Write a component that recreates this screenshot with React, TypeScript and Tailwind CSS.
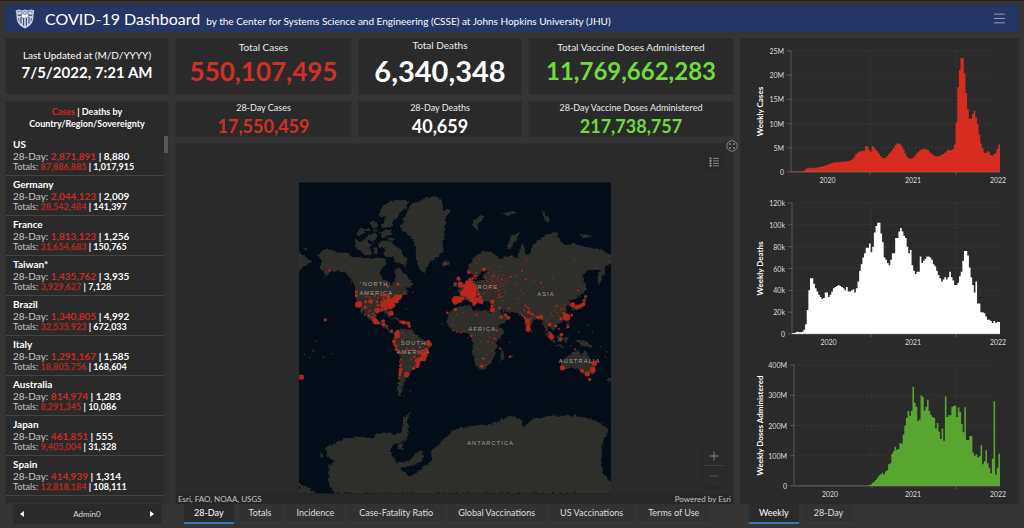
import { Menu, Minus, Plus } from "lucide-react";
import clsx from "clsx";

interface CountryStats {
    name: string;
    cases28: string;
    deaths28: string;
    casesTotal: string;
    deathsTotal: string;
}

const COUNTRIES: CountryStats[] = [
    { name: "US", cases28: "2,871,891", deaths28: "8,880", casesTotal: "87,886,885", deathsTotal: "1,017,915" },
    { name: "Germany", cases28: "2,044,123", deaths28: "2,009", casesTotal: "28,542,484", deathsTotal: "141,397" },
    { name: "France", cases28: "1,813,123", deaths28: "1,256", casesTotal: "31,654,683", deathsTotal: "150,765" },
    { name: "Taiwan*", cases28: "1,435,762", deaths28: "3,935", casesTotal: "3,929,627", deathsTotal: "7,128" },
    { name: "Brazil", cases28: "1,340,805", deaths28: "4,992", casesTotal: "32,535,923", deathsTotal: "672,033" },
    { name: "Italy", cases28: "1,291,167", deaths28: "1,585", casesTotal: "18,805,756", deathsTotal: "168,604" },
    { name: "Australia", cases28: "814,974", deaths28: "1,283", casesTotal: "8,291,345", deathsTotal: "10,086" },
    { name: "Japan", cases28: "461,851", deaths28: "555", casesTotal: "9,405,004", deathsTotal: "31,328" },
    { name: "Spain", cases28: "414,939", deaths28: "1,314", casesTotal: "12,818,184", deathsTotal: "108,111" },
];

const MAP_TABS = [
    "28-Day",
    "Totals",
    "Incidence",
    "Case-Fatality Ratio",
    "Global Vaccinations",
    "US Vaccinations",
    "Terms of Use",
];

// Weekly series, January 2020 to July 2022
const WEEKLY_CASES = [
    0.1, 0.1, 0.1, 0.1, 0.1, 0.1, 0.1, 0.2, 0.4, 0.7, 0.8, 0.9, 0.8, 0.8, 0.9, 0.9, 1.0, 1.1, 1.1, 1.2, 1.3, 1.4,
    1.5, 1.7, 1.8, 1.9, 2.0, 2.0, 2.0, 2.0, 2.1, 2.1, 2.1, 2.2, 2.2, 2.3, 2.5, 2.7, 3.1, 3.7, 4.0, 4.2, 4.3, 4.4,
    4.4, 5.3, 5.3, 4.6, 4.2, 5.3, 5.1, 4.6, 4.3, 3.8, 3.3, 2.9, 2.9, 3.0, 3.3, 3.7, 4.1, 4.5, 5.0, 5.6, 5.9, 5.9,
    5.7, 5.2, 4.6, 3.8, 3.2, 2.9, 2.7, 2.8, 3.0, 3.4, 3.9, 4.2, 4.5, 4.7, 4.8, 4.8, 4.7, 4.5, 4.1, 3.8, 3.5, 3.3,
    3.2, 3.3, 3.3, 3.5, 3.7, 4.0, 4.3, 4.6, 4.5, 4.6, 4.7, 5.7, 10.3, 17.5, 21, 23.5, 23.5, 20.4, 16.3, 13, 11, 11,
    12, 12.6, 11.3, 9.9, 7.7, 5.9, 4.9, 4, 3.9, 4.3, 4.1, 3.5, 3.4, 3.7, 4, 4.8, 5.7,
];

const WEEKLY_DEATHS = [
    1, 1, 1.5, 2, 1.5, 1.5, 2, 4, 9, 22, 40, 51, 51, 46, 42, 39, 36, 34, 32, 33, 38, 38, 34, 36, 39, 42, 43, 44, 45,
    44, 43, 42, 40, 43, 39, 39, 40, 41, 38, 42, 48, 58, 64, 70, 74, 79, 79, 83, 75, 80, 93, 99, 102, 102, 92, 84, 70,
    68, 65, 63, 68, 74, 74, 88, 88, 94, 97, 94, 90, 88, 80, 74, 77, 63, 58, 55, 57, 57, 71, 65, 67, 69, 71, 71, 70,
    68, 64, 62, 58, 54, 51, 48, 50, 52, 50, 52, 57, 52, 49, 45, 45, 47, 53, 57, 67, 76, 76, 72, 61, 52, 45, 38, 48,
    28, 28, 20, 20, 19, 16, 13, 13, 12, 10, 12, 10, 11, 11,
];

const WEEKLY_DOSES = [
    ...Array<number>(46).fill(1),
    3, 5, 10, 15, 20, 27, 35, 38, 44, 38, 48, 52, 72, 75, 107, 115, 130, 120, 122, 142, 140, 170, 200, 225, 248, 232,
    248, 328, 275, 262, 215, 220, 300, 295, 250, 262, 285, 248, 235, 228, 225, 190, 208, 180, 155, 190, 150, 297, 228,
    234, 234, 262, 265, 265, 228, 260, 245, 205, 178, 260, 152, 152, 165, 165, 110, 100, 105, 95, 98, 135, 72, 82,
    118, 75, 60, 42, 90, 280, 38, 60, 107,
];

const LAND = [
    // North and Central America
    "M66 235L80 215L100 213L125 222L150 222L168 235L200 238L225 240L250 237L268 240L275 255L258 268L252 285L262 303L280 308L288 322L297 308L300 290L297 272L310 268L325 285L335 290L345 305L352 318L345 327L325 328L340 340L325 350L305 365L298 380L285 392L278 400L286 418L280 420L272 405L258 402L245 408L238 420L242 430L252 432L258 425L268 424L264 438L277 442L282 456L300 460L288 466L270 450L255 440L235 434L220 422L212 408L200 392L206 412L195 398L183 370L178 345L178 325L165 300L150 285L130 278L108 278L88 298L65 314L92 292L75 272L68 260L80 250Z",
    "M10 220L30 235L48 248L40 255L25 262L10 280Z",
    // Canadian archipelago
    "M250 104L262 82L282 68L312 62L338 68L334 88L310 104L305 118L290 128L292 142L272 150L254 140L266 128L270 112L256 118Z",
    "M178 182L192 190L208 184L225 195L222 210L230 230L212 232L198 222L186 210L178 205Z",
    "M246 192L266 186L290 190L298 204L315 212L322 228L335 245L330 268L316 256L302 252L290 234L278 238L262 226L268 210L250 208Z",
    "M180 164L198 148L210 150L206 162L192 172L182 170Z",
    "M208 176L222 168L232 160L246 172L236 190L222 186L212 190Z",
    "M222 132L234 126L244 132L246 146L230 150Z",
    "M206 150L220 146L224 156L212 160Z",
    "M232 152L246 152L244 160L234 160Z",
    "M252 162L270 154L288 155L290 168L276 172L262 180Z",
    "M270 178L292 176L300 182L284 186Z",
    "M250 246L268 240L272 256L262 264Z",
    "M232 208L244 206L246 224L236 228Z",
    // Greenland and Iceland
    "M318 125L328 110L335 100L340 84L350 75L368 72L385 60L400 58L415 52L428 58L440 65L438 82L445 95L466 90L460 104L450 115L452 132L445 150L448 172L440 190L445 215L432 230L420 240L400 255L394 270L388 284L375 278L368 264L362 250L360 232L364 220L358 205L352 180L335 165L315 155L312 140L325 132Z",
    "M438 250L452 247L464 253L456 263L442 261Z",
    "M25 210L36 208L36 214L27 215Z",
    // Caribbean
    "M290 416L306 420L318 430L304 426Z",
    "M318 430L334 432L332 438L320 437Z",
    // South America
    "M300 460L320 450L345 452L365 470L372 480L400 488L408 497L400 512L396 535L380 545L370 560L352 575L336 594L326 610L320 635L314 645L326 650L310 650L304 636L309 610L312 570L312 532L298 510L290 484Z",
    // Eurasia
    "M515 282L520 260L535 235L560 220L585 218L605 235L615 242L640 232L668 238L674 202L684 195L690 230L702 226L704 210L725 185L755 168L785 160L790 185L810 200L835 195L865 205L905 210L947 228L947 258L930 262L925 285L911 320L903 300L915 275L895 272L875 275L860 290L866 320L870 332L856 350L836 362L822 366L826 380L812 382L812 400L816 415L800 430L782 440L776 456L766 450L760 442L756 460L770 480L760 478L746 450L740 425L726 420L716 426L705 440L698 464L688 445L684 420L670 405L650 400L638 405L624 395L614 386L620 405L640 412L630 430L604 446L594 430L585 405L592 388L590 370L566 368L560 378L546 364L540 376L524 370L496 360L486 376L470 376L470 358L490 355L494 345L484 335L504 325L514 310L522 300L540 310L565 300L563 286L576 278L566 270L556 280L542 300L530 286Z",
    "M484 300L492 296L496 312L506 324L488 328L490 314Z",
    "M474 314L484 312L484 324L474 326Z",
    "M632 206L648 175L676 158L662 178L645 212Z",
    "M528 128L552 110L566 112L562 124L548 134L546 156L536 148Z",
    "M738 100L748 98L752 112L762 122L756 132L744 118Z",
    "M855 166L885 170L890 176L860 178Z",
    "M618 108L640 100L664 98L660 106L636 112Z",
    // Africa and Madagascar
    "M465 400L482 386L520 380L530 392L545 396L575 394L586 405L598 430L612 450L630 452L622 465L604 490L600 528L586 554L570 570L553 575L543 565L533 530L530 495L526 470L510 462L485 464L465 452L455 437L456 418Z",
    "M614 520L624 514L624 540L616 548Z",
    // Japan, Indonesia and Oceania
    "M828 388L845 384L862 378L866 352L874 350L868 384L850 392L832 396Z",
    "M864 312L870 312L872 336L866 334Z",
    "M748 462L764 470L780 490L776 496L760 480Z",
    "M784 475L798 465L802 480L794 492L784 488Z",
    "M806 476L818 474L814 494L806 492Z",
    "M812 428L820 430L824 452L816 448Z",
    "M780 499L812 502L812 506L780 503Z",
    "M838 484L856 486L876 490L892 506L872 504L856 502Z",
    "M793 550L810 535L830 520L850 518L860 532L868 510L880 535L900 560L895 580L880 592L860 585L850 570L825 568L800 575L793 565Z",
    "M877 600L886 600L882 607Z",
    "M947 596L947 606L933 614L936 606Z",
    // Antarctica
    "M10 913L40 930L65 945L10 945Z",
    "M118 945L100 920L98 860L118 850L95 835L90 805L110 800L125 788L150 780L200 775L235 780L240 765L270 762L300 768L320 755L322 720L348 695L335 722L340 760L330 785L300 795L285 805L290 835L305 852L340 848L360 825L375 815L385 830L380 848L350 860L315 868L320 880L345 893L370 875L410 845L405 820L440 790L465 760L490 748L530 742L590 735L640 712L678 722L683 748L715 720L765 712L845 712L895 725L940 750L925 780L917 820L920 880L947 912L947 945Z",
    "M305 795L322 798L322 812L308 812Z",
    "M72 826L80 826L84 838L76 836Z",
].join("");

// x, y, radius
const CASE_DOTS = [
    [102, 276, 4], [148, 259, 2], [174, 257, 2], [166, 313, 2], [195, 313, 3], [242, 315, 2], [277, 324, 4],
    [307, 317, 5], [350, 317, 2], [89, 424, 5], [182, 340, 5], [182, 351, 5], [188, 378, 10], [192, 376, 7],
    [206, 345, 3], [212, 355, 3], [222, 356, 3], [210, 370, 5], [225, 369, 7], [209, 386, 5], [223, 396, 3],
    [238, 352, 3], [246, 358, 3], [244, 370, 4], [247, 380, 4], [245, 395, 8], [257, 350, 4], [265, 350, 5],
    [264, 361, 4], [278, 354, 6], [258, 370, 4], [260, 380, 7], [268, 370, 6], [268, 382, 8], [270, 390, 6],
    [278, 364, 7], [280, 376, 8], [284, 386, 7], [290, 368, 8], [290, 380, 8], [296, 362, 8], [302, 356, 8],
    [309, 357, 8], [302, 368, 7], [315, 352, 5], [326, 344, 3], [333, 347, 2], [351, 342, 2], [286, 404, 8],
    [258, 393, 5], [331, 391, 2], [199, 393, 3], [208, 409, 3], [219, 411, 4], [218, 400, 2], [229, 416, 4],
    [233, 405, 3], [237, 412, 3], [237, 425, 7], [241, 430, 8], [248, 434, 4], [263, 427, 5], [264, 438, 6],
    [274, 442, 3], [288, 457, 5], [314, 430, 4], [321, 431, 6], [328, 432, 5], [338, 434, 6], [341, 443, 5],
    [304, 466, 8], [306, 458, 5], [300, 478, 5], [308, 474, 5], [320, 462, 3], [326, 470, 2], [345, 467, 2],
    [353, 478, 2], [365, 472, 2], [318, 484, 3], [295, 490, 6], [296, 499, 4], [302, 503, 4], [302, 513, 5],
    [308, 515, 3], [315, 523, 4], [327, 478, 2], [339, 492, 2], [355, 470, 2], [334, 511, 3], [350, 514, 4],
    [373, 506, 4], [398, 490, 6], [402, 498, 7], [393, 496, 5], [391, 512, 5], [388, 521, 6], [383, 529, 8],
    [390, 530, 6], [385, 540, 8], [374, 542, 7], [364, 546, 7], [368, 553, 6], [365, 562, 7], [354, 569, 5],
    [347, 543, 3], [356, 535, 4], [370, 522, 6], [333, 588, 8], [317, 543, 3], [317, 555, 2], [314, 562, 4],
    [315, 573, 6], [313, 582, 5], [312, 590, 4], [311, 600, 3], [307, 615, 2], [314, 640, 2], [344, 637, 2],
    [17, 596, 8], [60, 488, 2], [26, 527, 2], [43, 536, 2], [51, 516, 2], [56, 518, 2], [83, 536, 2], [110, 526, 2],
    [449, 256, 3], [439, 436, 2], [455, 403, 4], [479, 393, 5],
    [488, 300, 6], [478, 316, 5], [495, 319, 9], [523, 303, 5], [515, 312, 7], [525, 313, 8], [510, 323, 8],
    [520, 324, 9], [531, 322, 9], [500, 344, 7], [505, 345, 10], [517, 340, 12], [529, 338, 13], [522, 350, 12],
    [534, 350, 9], [510, 334, 8], [540, 331, 6], [529, 362, 9], [537, 368, 9], [535, 378, 5], [545, 363, 6],
    [555, 368, 8], [482, 364, 12], [492, 364, 9], [473, 366, 5], [478, 374, 5], [501, 360, 5], [549, 347, 5],
    [554, 356, 5], [564, 345, 3], [546, 340, 3], [520, 282, 5], [538, 292, 4], [542, 283, 3], [540, 300, 3],
    [531, 299, 4], [542, 254, 2], [551, 243, 2], [536, 268, 2], [565, 273, 6], [578, 283, 2], [586, 235, 2],
    [583, 269, 2], [573, 305, 2], [560, 308, 2], [590, 370, 7], [589, 382, 5], [590, 394, 8], [612, 388, 4],
    [616, 416, 5], [624, 400, 3], [630, 409, 5], [638, 418, 6], [639, 390, 3], [592, 292, 3], [606, 300, 3],
    [611, 264, 2], [641, 262, 2], [647, 233, 2], [694, 242, 2], [679, 277, 3], [690, 302, 3], [645, 295, 3],
    [660, 291, 2], [664, 318, 2], [674, 337, 2], [682, 345, 2], [668, 360, 2], [713, 290, 2], [709, 310, 2],
    [736, 313, 3], [752, 265, 2], [771, 299, 2], [836, 242, 2], [899, 270, 2], [940, 248, 2], [800, 320, 2],
    [832, 317, 2], [853, 322, 2], [766, 344, 3], [847, 336, 3], [871, 331, 2], [720, 307, 2], [744, 325, 2],
    [688, 380, 3], [694, 386, 3], [700, 390, 3], [699, 401, 5], [708, 407, 4], [686, 396, 3], [680, 410, 3],
    [676, 404, 2], [696, 428, 8], [698, 440, 6], [698, 452, 8], [688, 418, 4], [706, 420, 3], [708, 460, 2],
    [715, 410, 3], [722, 416, 3], [728, 416, 5], [735, 415, 6], [739, 414, 4], [740, 420, 3], [754, 428, 2],
    [762, 438, 6], [780, 442, 5], [768, 404, 2], [776, 386, 2], [786, 402, 2], [795, 376, 2], [784, 382, 3],
    [797, 392, 3], [776, 396, 2], [804, 390, 2], [808, 378, 2], [790, 412, 2], [770, 412, 2], [796, 421, 5],
    [813, 416, 11], [828, 410, 4], [805, 405, 4], [800, 403, 2], [831, 379, 8], [843, 386, 6], [850, 384, 6],
    [858, 380, 6], [863, 377, 6], [865, 366, 4], [870, 354, 4], [816, 446, 4], [849, 460, 2], [877, 440, 2],
    [890, 460, 2], [765, 468, 5], [768, 475, 8], [762, 462, 4], [790, 451, 3], [798, 468, 5], [795, 482, 5],
    [826, 502, 2], [839, 512, 3], [875, 496, 2], [915, 505, 2], [933, 520, 2], [929, 535, 2],
    [800, 568, 8], [859, 577, 6], [875, 586, 8], [891, 574, 9], [896, 554, 8], [882, 603, 5],
    [472, 424, 2], [486, 408, 2], [503, 404, 2], [543, 409, 3], [471, 440, 2], [489, 436, 2], [473, 456, 3],
    [482, 460, 2], [496, 462, 3], [505, 456, 2], [527, 472, 4], [517, 478, 2], [560, 463, 2], [580, 462, 2],
    [604, 456, 4], [622, 464, 2], [597, 480, 3], [582, 476, 2], [577, 488, 3], [590, 496, 2], [556, 490, 2],
    [545, 509, 2], [572, 514, 2], [588, 514, 2], [563, 540, 4], [558, 563, 5], [575, 529, 2], [580, 550, 2],
    [571, 558, 2], [546, 541, 2], [592, 530, 2], [613, 510, 3], [617, 513, 2], [643, 491, 2], [643, 535, 4],
    [649, 533, 2], [621, 529, 2],
    // Eastern Europe and western Russia
    [566, 318, 2], [571, 296, 2], [577, 311, 2], [579, 324, 3], [584, 302, 2], [586, 316, 2], [588, 330, 2],
    [590, 309, 2], [594, 322, 3], [595, 301, 2], [598, 312, 2], [600, 294, 2], [601, 328, 2], [603, 319, 2],
    [607, 308, 2], [609, 336, 3], [610, 292, 2], [612, 325, 2], [614, 314, 2], [616, 343, 2], [618, 303, 3],
    [619, 332, 2], [622, 321, 2], [623, 290, 2], [625, 311, 2], [627, 340, 2], [630, 300, 2], [632, 316, 2],
    [610, 348, 3], [614, 356, 3], [620, 353, 2], [606, 357, 2], [622, 365, 2], [619, 298, 2], [636, 306, 2],
    [575, 332, 2], [582, 343, 2], [571, 340, 2], [598, 340, 2], [587, 296, 2], [593, 286, 2],
];

const CONTINENTS = [
    { label: "NORTH", x: 240, y: 321 },
    { label: "AMERICA", x: 242, y: 348 },
    { label: "EUROPE", x: 562, y: 331 },
    { label: "ASIA", x: 751, y: 352 },
    { label: "AFRICA", x: 560, y: 456 },
    { label: "SOUTH", x: 354, y: 500 },
    { label: "AMERICA", x: 354, y: 527 },
    { label: "AUSTRALIA", x: 852, y: 554 },
    { label: "ANTARCTICA", x: 585, y: 798 },
];

function WorldMap() {
    return (
        <svg viewBox="10 12 936 933" className="h-[312px] w-[312px]" role="img" aria-label="World map of cases">
            <defs>
                <filter id="coast" x="0" y="0" width="100%" height="100%">
                    <feTurbulence type="fractalNoise" baseFrequency="0.09" numOctaves="3" seed="4" />
                    <feDisplacementMap in="SourceGraphic" scale="12" xChannelSelector="R" yChannelSelector="G" />
                </filter>
            </defs>
            <rect x="10" y="12" width="936" height="933" fill="#020d17" />
            <path d={LAND} fill="#2d2d2b" filter="url(#coast)" />
            {CONTINENTS.map(({ label, x, y }) => (
                <text
                    key={`${label}-${y}`}
                    x={x}
                    y={y}
                    textAnchor="middle"
                    className="fill-[#a3a3a3] font-['Liberation_Sans',sans-serif] text-[17px] tracking-[0.2em]"
                >
                    {label}
                </text>
            ))}
            <g fill="#c3271b" fillOpacity="0.9">
                {CASE_DOTS.map(([x, y, r], i) => (
                    <circle key={i} cx={x} cy={y} r={r} />
                ))}
            </g>
        </svg>
    );
}

interface WeeklyChartProps {
    title: string;
    data: number[];
    max: number;
    ticks: string[];
    color: string;
    left: number;
    top: number;
    bottom: number;
    yearLines: number[];
}

function WeeklyChart({ title, data, max, ticks, color, left, top, bottom, yearLines }: WeeklyChartProps) {
    const right = 260;
    const step = (right - left) / data.length;
    const height = bottom - top;
    const area =
        `M${left} ${bottom}` +
        data.map((v, i) => `V${bottom - (v / max) * height}H${left + (i + 1) * step}`).join("") +
        `V${bottom}Z`;
    const middle = (top + bottom) / 2;

    return (
        <svg viewBox="0 0 279 155" className="w-full" role="img" aria-label={title}>
            {ticks.map((tick, i) => {
                const y = bottom - (i / (ticks.length - 1)) * height;
                return (
                    <g key={tick}>
                        <line x1={left} x2={right - 2} y1={y} y2={y} stroke="#414141" strokeWidth="0.6" strokeDasharray="2 2" />
                        <line x1={left - 4} x2={left} y1={y} y2={y} stroke="#6b6b6b" strokeWidth="0.7" />
                        <text x={left - 7} y={y + 3} textAnchor="end" className="fill-[#dedede] text-[7px]">
                            {tick}
                        </text>
                    </g>
                );
            })}
            {yearLines.map((x) => (
                <g key={x}>
                    <line x1={x} x2={x} y1={top} y2={bottom} stroke="#414141" strokeWidth="0.6" strokeDasharray="2 2" />
                    <line x1={x} x2={x} y1={bottom} y2={bottom + 3} stroke="#6b6b6b" strokeWidth="0.7" />
                </g>
            ))}
            <path d={area} fill={color} />
            <path d={`M${left} ${top}V${bottom}H${right}`} fill="none" stroke="#8a8a8a" strokeOpacity="0.6" strokeWidth="0.8" />
            <g textAnchor="middle" className="fill-[#dedede] text-[7px]">
                <text x={(left + yearLines[0]) / 2 - 3} y={bottom + 11}>
                    2020
                </text>
                <text x="173" y={bottom + 11}>
                    2021
                </text>
                <text x="258" y={bottom + 11}>
                    2022
                </text>
            </g>
            <text
                x="23"
                y={middle}
                textAnchor="middle"
                transform={`rotate(-90 23 ${middle})`}
                className="fill-white text-[8px] font-bold"
            >
                {title}
            </text>
        </svg>
    );
}

function Crest() {
    return (
        <svg viewBox="0 0 20 20" className="h-5 w-5 shrink-0" aria-hidden="true">
            <path d="M.6 1.4L4 .4L7 1.4L10 .4L13 1.4L16 .4L19.4 1.4L18.8 4L18.2 10C17.6 15 14 17.6 10 19.6C6 17.6 2.4 15 1.8 10L1.2 4Z" fill="#ccd3e2" />
            <path d="M2.4 5.4H17.6L17.2 7H2.8Z" fill="#51618a" />
            <path d="M2 3L5 2.2L8 3.4L10 2.4L12 3.4L15 2.2L18 3" fill="none" stroke="#51618a" strokeWidth=".7" />
            <path d="M6 8V14.6M8.6 8V16.8M11.4 8V16.8M14 8V14.6" stroke="#33467a" strokeWidth="1.1" />
            <path d="M6.4 4.4L10 5.4L13.6 4.4V8.6L10 9.4L6.4 8.6Z" fill="#f5f7fb" stroke="#33467a" strokeWidth=".5" />
            <path d="M3.4 9L4.2 12.4M16.6 9L15.8 12.4" stroke="#33467a" strokeWidth=".8" />
        </svg>
    );
}

interface StatCardProps {
    label: string;
    value: string;
    className: string;
    valueClassName: string;
}

function StatCard({ label, value, className, valueClassName }: StatCardProps) {
    return (
        <div
            className={clsx(
                "flex flex-col items-center border border-[#303030] bg-[#2a2a2a] whitespace-nowrap",
                className,
            )}
        >
            <div className="leading-3 text-[#ececec]">{label}</div>
            <div className={clsx("font-bold", valueClassName)}>{value}</div>
        </div>
    );
}

function Tabs({ tabs, active }: { tabs: string[]; active: string }) {
    return (
        <div className="flex h-5 gap-[5px] px-[9px]">
            {tabs.map((tab) => (
                <button
                    key={tab}
                    type="button"
                    className={clsx(
                        "border-b-2 px-[10px] text-[9px] leading-4 whitespace-nowrap",
                        tab === active
                            ? "border-[#3579b5] bg-[#2a2a2a] text-white"
                            : "border-[#383838] bg-[#323232] text-[#dedede]",
                    )}
                >
                    {tab}
                </button>
            ))}
        </div>
    );
}

function CountryRow({ country }: { country: CountryStats }) {
    return (
        <li className="h-10 border-b border-[#444444] pt-[2px] pl-[7px] whitespace-nowrap text-[#c4c4c4]">
            <div className="text-[10px] leading-3 font-bold text-white">{country.name}</div>
            <div className="text-[10px] leading-3">
                28-Day: <b className="text-[#cf2b20]">{country.cases28}</b>{" "}
                <b className="text-white">| {country.deaths28}</b>
            </div>
            <div className="text-[9px] leading-[10px]">
                Totals: <b className="text-[#bd291f]">{country.casesTotal}</b>{" "}
                <b className="text-white">| {country.deathsTotal}</b>
            </div>
        </li>
    );
}

export default function App() {
    return (
        <div className="flex h-screen min-h-[528px] flex-col gap-[6px] border-t border-[#222222] bg-[#353535] px-[5px] pt-1 pb-1 font-[Lato,sans-serif] text-white">
            <header className="flex h-[27px] shrink-0 items-center bg-[#243665] pr-3 pl-[10px]">
                <Crest />
                <h1 className="ml-[10px] flex items-baseline gap-[6px] whitespace-nowrap">
                    <span className="text-[16px] leading-6">COVID-19 Dashboard</span>
                    <span className="text-[10px]">
                        by the Center for Systems Science and Engineering (CSSE) at Johns Hopkins University (JHU)
                    </span>
                </h1>
                <button type="button" aria-label="Menu" className="ml-auto text-[#b4bfd6]">
                    <Menu className="h-[15px] w-[15px]" strokeWidth={1.2} />
                </button>
            </header>

            <div className="grid min-h-0 flex-1 grid-cols-[164px_minmax(0,1fr)_279px] gap-[6px]">
                <aside className="flex min-h-0 flex-col gap-[6px]">
                    <div className="flex h-[57px] shrink-0 flex-col items-center justify-center border border-[#303030] bg-[#2a2a2a] pb-1 whitespace-nowrap">
                        <div className="text-[10px] leading-[14px]">Last Updated at (M/D/YYYY)</div>
                        <div className="text-[15px] leading-5 font-bold">7/5/2022, 7:21 AM</div>
                    </div>
                    <div className="flex min-h-0 flex-1 flex-col">
                        <div className="flex min-h-0 flex-1 flex-col border border-[#303030] bg-[#2a2a2a]">
                            <h2 className="pt-1 pb-[6px] text-center text-[9px] leading-3 font-bold">
                                <span className="text-[#cf2b20]">Cases</span> | Deaths by
                                <br />
                                Country/Region/Sovereignty
                            </h2>
                            <div className="flex min-h-0 flex-1">
                                <ul className="flex-1 overflow-hidden">
                                    {COUNTRIES.map((country) => (
                                        <CountryRow key={country.name} country={country} />
                                    ))}
                                    <li className="pt-1 pl-[7px] text-[10px] leading-3 font-bold">United Kingdom</li>
                                </ul>
                                <div className="w-1 bg-[#2f2f2f]">
                                    <div className="h-[17px] bg-[#575757]" />
                                </div>
                            </div>
                        </div>
                        <div className="mx-2 flex h-5 shrink-0 items-center justify-between bg-[#2a2a2a] px-[7px] text-[8px]">
                            <button type="button" aria-label="Previous">
                                <svg viewBox="0 0 4 6" className="h-[6px] w-1" fill="currentColor">
                                    <path d="M4 0V6L0 3Z" />
                                </svg>
                            </button>
                            <span className="text-[#dedede]">Admin0</span>
                            <button type="button" aria-label="Next">
                                <svg viewBox="0 0 4 6" className="h-[6px] w-1" fill="currentColor">
                                    <path d="M0 0V6L4 3Z" />
                                </svg>
                            </button>
                        </div>
                    </div>
                </aside>

                <main className="flex min-h-0 flex-col gap-[6px]">
                    <div className="grid shrink-0 grid-cols-[177fr_164fr_206fr] grid-rows-[57px_36px] gap-[6px]">
                        <StatCard label="Total Cases" value="550,107,495" className="pt-[2px] text-[10px]" valueClassName="text-[26px] leading-9 text-[#d32f25]" />
                        <StatCard label="Total Deaths" value="6,340,348" className="text-[10px]" valueClassName="text-[29px] leading-10" />
                        <StatCard label="Total Vaccine Doses Administered" value="11,769,662,283" className="pt-[2px] text-[10px]" valueClassName="text-[24px] leading-9 text-[#6fdc3c]" />
                        <StatCard label="28-Day Cases" value="17,550,459" className="text-[9px]" valueClassName="text-[18px] leading-6 text-[#d32f25]" />
                        <StatCard label="28-Day Deaths" value="40,659" className="text-[9px]" valueClassName="text-[18px] leading-6" />
                        <StatCard label="28-Day Vaccine Doses Administered" value="217,738,757" className="text-[9px]" valueClassName="text-[18px] leading-6 text-[#6fdc3c]" />
                    </div>

                    <div className="flex min-h-0 flex-1 flex-col">
                        <section className="relative flex min-h-0 flex-1 flex-col items-center justify-end border border-b-0 border-[#303030] bg-[#2a2a2a]">
                            <WorldMap />
                            <div className="flex w-full justify-between bg-[#272727] px-[2px] text-[8px] leading-[10px] text-[#c4c4c4]">
                                <span>Esri, FAO, NOAA, USGS</span>
                                <span>
                                    Powered by <a href="#esri">Esri</a>
                                </span>
                            </div>
                            <button
                                type="button"
                                aria-label="Expand map"
                                className="absolute -top-1 -right-[5px] text-[#8a8a8a]"
                            >
                                <svg viewBox="0 0 12 12" className="h-3 w-3" fill="none" stroke="currentColor">
                                    <circle cx="6" cy="6" r="5.2" fill="#2a2a2a" strokeWidth=".9" />
                                    <path d="M3.4 5V3.4H5M7 3.4H8.6V5M8.6 7V8.6H7M5 8.6H3.4V7M3.4 3.4L5.2 5.2M8.6 3.4L6.8 5.2M8.6 8.6L6.8 6.8M3.4 8.6L5.2 6.8" strokeWidth=".8" />
                                </svg>
                            </button>
                            <button
                                type="button"
                                aria-label="Legend"
                                className="absolute top-2 right-[9px] flex h-5 w-5 items-center justify-center bg-[#282828] text-[#9a9a9a]"
                            >
                                <svg viewBox="0 0 10 10" className="h-[10px] w-[10px]" stroke="currentColor" fill="none">
                                    <path d="M1.5 .5V2.3M1.5 3V4.8M1.5 5.5V7.3M1.5 8V9.8" strokeWidth="2" />
                                    <path d="M4 1.4H10M4 3.9H10M4 6.4H10M4 8.9H10" strokeWidth=".8" />
                                </svg>
                            </button>
                            <div className="absolute right-[9px] bottom-[18px] flex w-5 flex-col divide-y divide-[#3d3d3d] bg-[#2a2a2a] shadow-sm">
                                <button type="button" aria-label="Zoom in" className="flex h-5 items-center justify-center text-[#8f8f8f]">
                                    <Plus className="h-[14px] w-[14px]" strokeWidth={1.5} />
                                </button>
                                <button type="button" aria-label="Zoom out" className="flex h-5 items-center justify-center text-[#5c5c5c]">
                                    <Minus className="h-[14px] w-[14px]" strokeWidth={1.5} />
                                </button>
                            </div>
                        </section>
                        <Tabs tabs={MAP_TABS} active="28-Day" />
                    </div>
                </main>

                <div className="flex min-h-0 flex-col">
                    <section className="flex min-h-0 flex-1 flex-col justify-between bg-[#2a2a2a]">
                        <WeeklyChart
                            title="Weekly Cases"
                            data={WEEKLY_CASES}
                            max={25}
                            ticks={["0", "5M", "10M", "15M", "20M", "25M"]}
                            color="#d62d20"
                            left={51}
                            top={13}
                            bottom={134}
                            yearLines={[130, 216]}
                        />
                        <WeeklyChart
                            title="Weekly Deaths"
                            data={WEEKLY_DEATHS}
                            max={120}
                            ticks={["0", "20k", "40k", "60k", "80k", "100k", "120k"]}
                            color="#ffffff"
                            left={52}
                            top={9}
                            bottom={140}
                            yearLines={[131, 216]}
                        />
                        <WeeklyChart
                            title="Weekly Doses Administered"
                            data={WEEKLY_DOSES}
                            max={400}
                            ticks={["0", "100M", "200M", "300M", "400M"]}
                            color="#58a530"
                            left={54}
                            top={16}
                            bottom={137}
                            yearLines={[132, 216]}
                        />
                    </section>
                    <Tabs tabs={["Weekly", "28-Day"]} active="Weekly" />
                </div>
            </div>
        </div>
    );
}
